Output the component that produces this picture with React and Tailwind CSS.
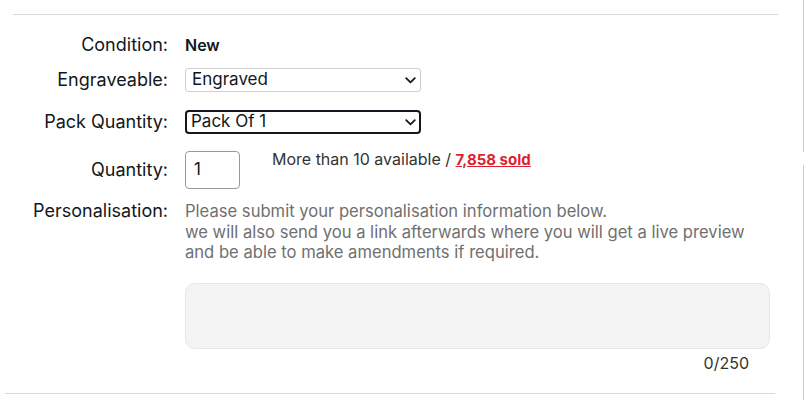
import React from 'react';

const Chevron = () => (
  <svg width="11" height="7" viewBox="0 0 11 7" className="shrink-0">
    <path d="M1.2 1.2 L5.5 5.3 L9.8 1.2" fill="none" stroke="#111820" strokeWidth="1.8" strokeLinecap="round" strokeLinejoin="round" />
  </svg>
);

const Row = ({ label, children, className = '' }) => (
  <div className={`flex ${className}`}>
    <div className="w-[168px] shrink-0 text-right text-[18px] leading-[20px] text-[#111820]">{label}</div>
    <div className="ml-[17px] flex-1">{children}</div>
  </div>
);

export default function App() {
  return (
    <div className="relative h-[406px] w-[808px] overflow-hidden bg-white font-['Inter',sans-serif]">
      <div className="flex">
        <div className="w-[790px]">
          <div className="ml-[13px] mt-[14px] h-px w-[765px] bg-[#d9d9d9]" />

          <div className="mt-[20px] flex flex-col">
            <Row label="Condition:" className="h-[20px] items-center">
              <span className="text-[16px] font-semibold text-[#111820]">New</span>
            </Row>

            <Row label="Engraveable:" className="mt-[13px] h-[24px] items-center">
              <div className="flex h-[24px] w-[236px] items-center justify-between rounded-[3px] border border-[#cfcfcf] pl-[6px] pr-[4px] text-[17px] text-[#111820]">
                <span>Engraved</span>
                <Chevron />
              </div>
            </Row>

            <Row label="Pack Quantity:" className="mt-[18px] h-[24px] items-center">
              <div className="flex h-[24px] w-[236px] items-center justify-between rounded-[4px] border-2 border-[#111820] pl-[4px] pr-[3px] text-[17px] text-[#111820]">
                <span>Pack Of 1</span>
                <Chevron />
              </div>
            </Row>

            <Row label="Quantity:" className="mt-[17px] items-center">
              <div className="flex items-start">
                <div className="flex h-[38px] w-[55px] items-center rounded-[4px] border border-[#9a9a9a] pl-[8px] text-[17px] text-[#111820]">
                  1
                </div>
                <div className="ml-[32px] -mt-[2px] text-[16px] leading-[20px] text-[#333]">
                  More than 10 available /{' '}
                  <span className="text-[15px] font-bold text-[#dd1e31] underline">7,858 sold</span>
                </div>
              </div>
            </Row>

            <Row label="Personalisation:" className="mt-[12px]">
              <div className="text-[16.6px] leading-[20.5px] text-[#707070]">
                <div>Please submit your personalisation information below.</div>
                <div>we will also send you a link afterwards where you will get a live preview</div>
                <div>and be able to make amendments if required.</div>
              </div>
            </Row>

            <div className="ml-[185px] mt-[20px] h-[66px] w-[585px] rounded-[10px] border border-[#e6e6e6] bg-[#f3f3f3]" />
            <div className="mr-[41px] mt-[4px] text-right text-[16px] leading-[20px] text-[#333]">0/250</div>
          </div>

          <div className="ml-[5px] mt-[20px] h-px w-[770px] bg-[#d9d9d9]" />
        </div>

        <div className="ml-[13px] flex flex-col">
          <div className="h-[152px] w-[5px] border-l border-[#cfcfcf]" />
          <div className="mt-[13px] h-[235px] w-[5px] border-l border-[#cfcfcf]" />
        </div>
      </div>
    </div>
  );
}
